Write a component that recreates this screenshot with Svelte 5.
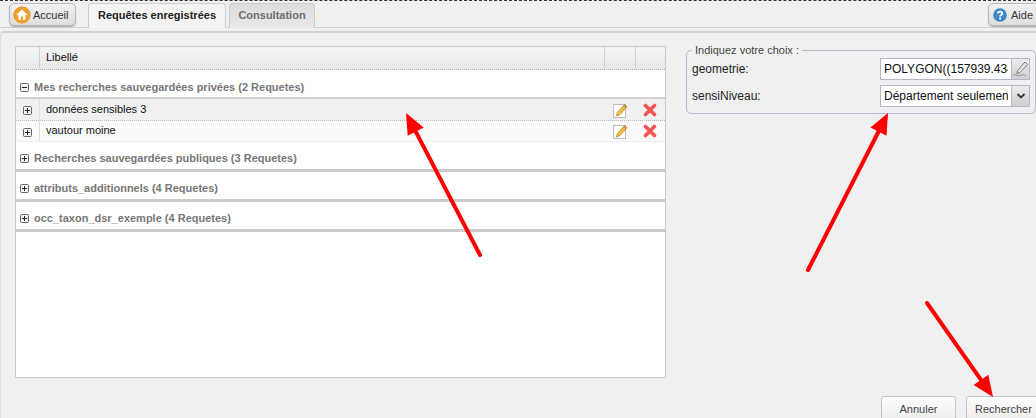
<script>
	const groups = [
		{ label: 'Mes recherches sauvegardées privées (2 Requetes)', open: true, rows: ['données sensibles 3', 'vautour moine'] },
		{ label: 'Recherches sauvegardées publiques (3 Requetes)', open: false, rows: [] },
		{ label: 'attributs_additionnels (4 Requetes)', open: false, rows: [] },
		{ label: 'occ_taxon_dsr_exemple (4 Requetes)', open: false, rows: [] }
	];

	const arrows = [
		{ x1: 480, y1: 255, x2: 406, y2: 113 },
		{ x1: 808, y1: 270, x2: 888, y2: 113 },
		{ x1: 927, y1: 303, x2: 993, y2: 397 }
	];

	// arrow head as a triangle at the tip, line stops at its base
	function head(a) {
		const dx = a.x2 - a.x1;
		const dy = a.y2 - a.y1;
		const len = Math.hypot(dx, dy);
		const ux = dx / len;
		const uy = dy / len;
		const bx = a.x2 - ux * 21;
		const by = a.y2 - uy * 21;
		return `${a.x2},${a.y2} ${bx - uy * 9},${by + ux * 9} ${bx + uy * 9},${by - ux * 9}`;
	}
</script>

{#snippet toggle(open)}
	<svg class="toggle" width="9" height="9" viewBox="0 0 9 9">
		<rect x="0.5" y="0.5" width="8" height="8" rx="1" fill="#f2f2f2" stroke="#666" />
		<path d={open ? 'M2 4.5h5' : 'M2 4.5h5M4.5 2v5'} stroke="#222" fill="none" />
	</svg>
{/snippet}

<div class="page">
	<header class="topbar">
		<button class="tool home">
			<svg width="18" height="18" viewBox="0 0 20 20">
				<circle cx="10" cy="10" r="9" fill="#f0a030" stroke="#e58e1a" />
				<path d="M10 3.8 3.8 10H6v5.2h2.8v-3.4h2.4v3.4H14V10h2.2z" fill="#fff" />
			</svg>
			Accueil
		</button>
		<nav class="tabs">
			<span class="tab active">Requêtes enregistrées</span>
			<span class="tab">Consultation</span>
		</nav>
		<button class="tool help">
			<svg width="14" height="14" viewBox="0 0 14 14">
				<circle cx="7" cy="7" r="6.8" fill="#3b88c8" />
				<path d="M4.8 5.4C4.9 3.2 9.3 3.1 9.3 5.4 9.3 7 7.1 6.8 7.1 8.4" fill="none" stroke="#fff" stroke-width="1.8" />
				<rect x="6.1" y="9.5" width="2" height="2" fill="#fff" />
			</svg>
			Aide
		</button>
	</header>

	<main class="panel">
		<div class="columns">
			<section class="grid">
				<div class="grid-head">
					<span class="cell-toggle"></span>
					<span class="cell-label">Libellé</span>
					<span class="cell-action"></span>
					<span class="cell-action"></span>
				</div>
				{#each groups as group}
					<div class="group" class:first={group.open}>
						{@render toggle(group.open)}
						<span>{group.label}</span>
					</div>
					{#each group.rows as row, i}
						<div class="row" class:odd={i === 0}>
							<span class="cell-toggle">{@render toggle(false)}</span>
							<span class="cell-label">{row}</span>
							<span class="cell-action">
								<svg width="16" height="16" viewBox="0 0 16 16">
									<rect x="1.5" y="2.5" width="12" height="13" fill="#fff" stroke="#bdbdbd" />
									<path d="M5 11 12.5 2.5 15 4.8 7.5 13 4.5 14z" fill="#f2c040" stroke="#b08020" stroke-width=".7" />
									<path d="M12.5 2.5 15 4.8 14 6 11.4 3.7z" fill="#c08a50" />
								</svg>
							</span>
							<span class="cell-action">
								<svg width="14" height="14" viewBox="0 0 14 14">
									<path d="M2.5 2.5 11.5 11.5M11.5 2.5 2.5 11.5" stroke="#f25555" stroke-width="3.6" stroke-linecap="round" />
								</svg>
							</span>
						</div>
					{/each}
				{/each}
			</section>

			<fieldset class="choice">
				<legend>Indiquez votre choix :</legend>
				<div class="field">
					<label for="geometrie">geometrie:</label>
					<div class="combo">
						<input id="geometrie" value="POLYGON((157939.434 6" readonly />
						<span class="trigger">
							<svg width="17" height="18" viewBox="0 0 17 18">
								<path d="M5.5 10.5 13 2 15.5 4.5 8 12.5 5 13.5z" fill="#e4e4e4" stroke="#7c7c7c" />
								<path d="M1 15.5C3.5 13 6 17 8.5 15.5S12 15 14 16" fill="none" stroke="#8c8c8c" />
							</svg>
						</span>
					</div>
				</div>
				<div class="field">
					<label for="sensi">sensiNiveau:</label>
					<div class="combo">
						<input id="sensi" value="Département seulement" readonly />
						<span class="trigger">
							<svg width="10" height="8" viewBox="0 0 10 8">
								<path d="M1.5 2 5 5.5 8.5 2" fill="none" stroke="#333" stroke-width="1.8" />
							</svg>
						</span>
					</div>
				</div>
			</fieldset>
		</div>

		<footer class="actions">
			<button class="action annuler">Annuler</button>
			<button class="action rechercher">Rechercher</button>
		</footer>
	</main>

	<svg class="arrows" width="1036" height="418" viewBox="0 0 1036 418">
		{#each arrows as a}
			<line x1={a.x1} y1={a.y1} x2={a.x1 + (a.x2 - a.x1) * 0.93} y2={a.y1 + (a.y2 - a.y1) * 0.93} stroke="#ff0000" stroke-width="4" stroke-linecap="round" />
			<polygon points={head(a)} fill="#ff0000" />
		{/each}
	</svg>
</div>

<style>
	:global(body) {
		margin: 0;
		background: #f0f0f0;
	}
	.page {
		position: relative;
		width: 1036px;
		height: 418px;
		overflow: hidden;
		font-family: "Liberation Sans", Arial, sans-serif;
		font-size: 11px;
		color: #222;
		background: #f0f0f0;
		border-top: 1px dashed #333;
		box-sizing: border-box;
	}
	.topbar {
		display: flex;
		align-items: flex-end;
		height: 26px;
		padding-left: 9px;
		border-bottom: 1px solid #d0d0d0;
	}
	.tool {
		display: flex;
		align-items: center;
		gap: 2px;
		height: 23px;
		box-sizing: border-box;
		margin-bottom: 1px;
		padding: 0 4px 0 3px;
		border: 1px solid #b8b8b8;
		border-radius: 5px;
		background: linear-gradient(#f2f2f2, #dedede);
		box-shadow: 0 1px 1px #aaa;
		font: inherit;
		color: #333;
	}
	.home {
		width: 67px;
	}
	.help {
		width: 60px;
		margin-left: auto;
		margin-right: -12px;
		padding-left: 4px;
		gap: 4px;
	}
	.tabs {
		display: flex;
		gap: 3px;
		margin-left: 12px;
		margin-bottom: -1px;
	}
	.tab {
		display: flex;
		align-items: center;
		justify-content: center;
		width: 86px;
		height: 25px;
		padding-bottom: 2px;
		box-sizing: border-box;
		border: 1px solid #ccc;
		border-bottom: 0;
		border-radius: 4px 4px 0 0;
		font-weight: bold;
		color: #6f6f6f;
		background: linear-gradient(#ddd, #e8e8e8);
	}
	.tab.active {
		width: 138px;
		color: #222;
		background: #f4f4f4;
	}
	.panel {
		margin-top: 3px;
		height: 387px;
		border-top: 2px solid #d4d4d4;
		border-left: 1px solid #ddd;
		border-radius: 4px 0 0 0;
		display: flex;
		flex-direction: column;
	}
	.columns {
		display: flex;
		align-items: flex-start;
		padding: 13px 0 0 14px;
		height: 349px;
		box-sizing: border-box;
	}
	.grid {
		width: 651px;
		height: 332px;
		box-sizing: border-box;
		border: 1px solid #c8c8c8;
		background: #fff;
	}
	.grid-head {
		display: flex;
		height: 22px;
		background: linear-gradient(#f4f4f4, #e8e8e8);
		border-bottom: 1px dotted #aaa;
	}
	.grid-head > span {
		display: flex;
		align-items: center;
		border-right: 1px solid #d0d0d0;
	}
	.grid-head > .cell-label {
		padding-bottom: 2px;
		color: #111;
	}
	.cell-toggle {
		width: 23px;
		display: flex;
		align-items: center;
		justify-content: center;
		flex: none;
	}
	.cell-label {
		flex: 1;
		padding-left: 6px;
		display: flex;
		align-items: center;
	}
	.cell-action {
		width: 30px;
		flex: none;
		display: flex;
		align-items: center;
		justify-content: center;
	}
	.grid-head > .cell-action:last-child {
		width: 29px;
		border-right: 0;
	}
	.group {
		display: flex;
		align-items: flex-end;
		gap: 5px;
		height: 30px;
		padding: 0 0 4px 4px;
		box-sizing: border-box;
		font-weight: bold;
		color: #777;
		border-bottom: 3px solid #cfcaca;
	}
	.group.first {
		height: 29px;
		padding-bottom: 3px;
		border-bottom: 2px solid #d4d0d0;
	}
	.group span {
		line-height: 13px;
	}
	.toggle {
		flex: none;
		margin-bottom: 2px;
	}
	.row {
		display: flex;
		height: 21px;
		box-sizing: border-box;
		background: #fafafa;
		border-bottom: 1px solid #eee;
	}
	.row.odd {
		background: #f0f0f0;
		height: 22px;
		border-bottom: 1px dotted #bbb;
	}
	.row .cell-toggle {
		border-right: 1px solid #ddd;
	}
	.row .toggle {
		margin: 2px 0 0;
	}
	.row .cell-label {
		color: #111;
		padding-bottom: 2px;
	}
	.choice {
		width: 350px;
		height: 70px;
		box-sizing: border-box;
		margin: -2px 0 0 20px;
		padding: 0 5px;
		border: 1px solid #b5b8c8;
		border-radius: 5px;
		min-width: 0;
	}
	.choice legend {
		padding: 0 3px;
		margin-left: 0;
		color: #444;
	}
	.field {
		display: flex;
		align-items: center;
		justify-content: space-between;
		height: 27px;
		font-size: 12px;
	}
	.field:first-of-type {
		margin-top: -1px;
	}
	.field label {
		color: #222;
	}
	.combo {
		display: flex;
		width: 150px;
		height: 22px;
		box-sizing: border-box;
		border: 1px solid #b5b8c8;
	}
	.combo input {
		flex: 1;
		min-width: 0;
		border: 0;
		outline: 0;
		padding: 0 3px;
		font: inherit;
		color: #111;
		background: #fff;
	}
	.trigger {
		width: 17px;
		flex: none;
		display: flex;
		align-items: center;
		justify-content: center;
		border-left: 1px solid #b5b8c8;
		background: linear-gradient(#ececec, #cfcfcf);
	}
	.actions {
		display: flex;
		justify-content: flex-end;
		gap: 10px;
		padding-top: 18px;
		margin-right: -7px;
	}
	.action {
		height: 26px;
		box-sizing: border-box;
		border: 1px solid #c4c4c4;
		border-radius: 3px;
		background: linear-gradient(#fdfdfd, #ececec);
		font: inherit;
		color: #444;
	}
	.annuler {
		width: 75px;
	}
	.rechercher {
		width: 77px;
		padding: 0 0 0 8px;
		text-align: left;
	}
	.arrows {
		position: absolute;
		left: 0;
		top: -1px;
		pointer-events: none;
	}
</style>
